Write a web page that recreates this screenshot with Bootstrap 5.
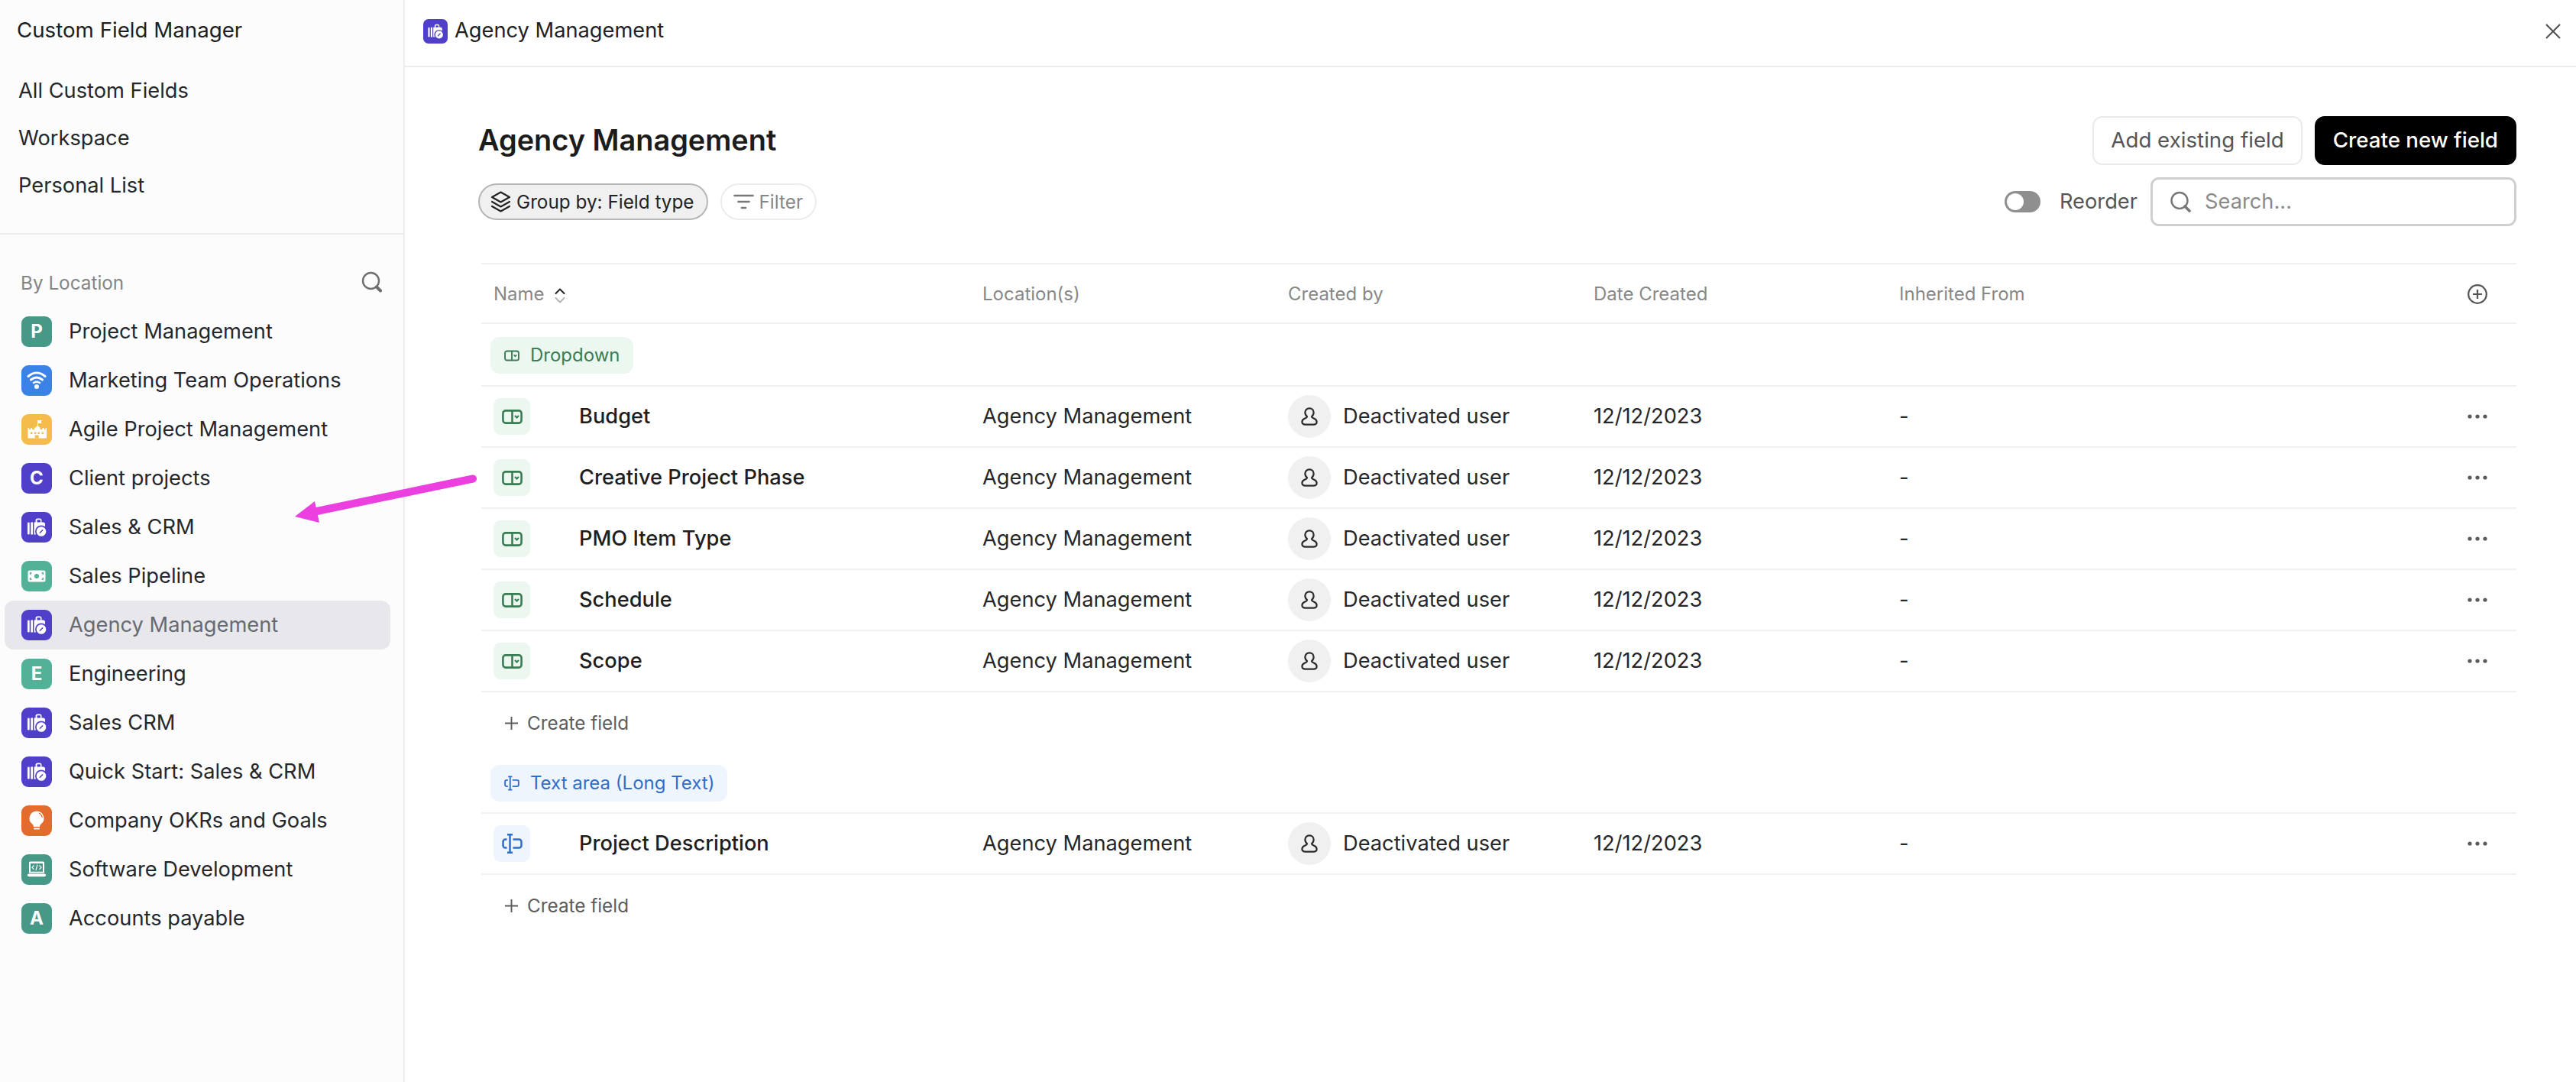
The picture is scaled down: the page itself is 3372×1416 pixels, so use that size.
<!DOCTYPE html>
<html lang="en">
<head>
<meta charset="utf-8">
<title>Custom Field Manager</title>
<link href="https://cdn.jsdelivr.net/npm/bootstrap@5.3.0/dist/css/bootstrap.min.css" rel="stylesheet">
<style>
html,body{height:100%}
body{font-family:"Inter","Noto Sans",sans-serif;font-size:27.25px;color:#1f2124;background:#fff;overflow:hidden}
.app-shell{height:1416px;width:3372px}
.side-pane{width:530px;background:#fcfcfc;border-right:2px solid #ececec;flex:none}
.side-title{height:80px;padding-left:22px;color:#1d1f22;font-size:27.7px}
.side-links{padding:8px 0 0 24px;box-sizing:content-box;height:217px;border-bottom:2px solid #ececec}
.side-links a{display:flex;align-items:center;height:62px;color:#25272a;text-decoration:none}
.loc-head{padding:48px 27px 0 27px;height:95px;color:#858585;font-size:24.3px}
.loc-item{height:64px;margin:0 17px 0 6px;padding-left:22px;gap:22px;border-radius:12px;color:#25272a}
.loc-item.is-active{background:#e8e8ec;color:#666a72}
.tile{width:40px;height:40px;border-radius:9px;color:#fff;font-size:24px;font-weight:700;flex:none}
.tile svg{width:40px;height:40px;display:block}
.t-teal{background:#489888}.t-blue{background:#3b82e6}.t-amber{background:#f6bc4b}.t-indigo{background:#4f3fc9}.t-mint{background:#52b197}.t-orange{background:#e26b2d}
.tile-sm{width:32px;height:32px;border-radius:7px}
.tile-sm svg{width:32px;height:32px}
.main-pane{min-width:0}
.top-bar{height:88px;padding:0 20px 5px 24px;border-bottom:2px solid #ececec;gap:9px}
.close-x{margin-left:auto;width:20px;height:20px;display:block;color:#4d4d4d}
.content-pad{padding:64px 78px 0 96px}
.page-name{font-size:37.9px;font-weight:600;color:#1c1c1c;margin:0}
.act-btn{height:64px;padding:0 22px;font-size:27.7px;border-radius:13px;line-height:1;display:flex;align-items:center}
.act-light{border:2px solid #eaeaea;background:#fff;color:#555}
.act-dark{border:2px solid #000;background:#000;color:#fff;font-weight:500}
.tools-row{margin-top:16px;height:64px}
.pill{height:48px;border-radius:24px;font-size:24.3px;gap:7px;padding:0 16px 0 14px;line-height:1}
.pill-on{background:#f0f0f0;border:2px solid #b6b6b6;color:#222}
.pill-off{background:#fff;border:2px solid #ececec;color:#868686;margin-left:16px;padding:0 16px 0 15px}
.sw-track{width:47px;height:28px;background:#8f8f8f;border-radius:14px;padding:3px;display:block}
.sw-knob{width:22px;height:22px;background:#fff;border-radius:50%;display:block}
.sw-text{color:#555;margin:0 17px 0 25px}
.find-box{width:479px;height:64px;border:3px solid #cfcfcf;border-radius:11px;padding-left:22px;gap:16px;color:#8a8a8a}
.fld-wrap{margin-top:48px;margin-left:4px}
.fld-table{table-layout:fixed;width:2664px;border-collapse:separate;border-spacing:0;margin:0}
.fld-table>*>tr>*{padding:0 0 0 17px;border-bottom:2px solid #f0f0f0;vertical-align:middle;background:transparent;font-weight:400;box-shadow:none}
.fld-table>thead>tr>*{height:80px;border-top:2px solid #f0f0f0;color:#888;font-size:24px;padding-top:1px}
.fld-table>thead>tr>.c-name{padding-left:16px}
.fld-table .c-name{width:639px}.fld-table .c-std{width:400px}
.fld-table>tbody>tr.grp>td{height:82px;padding-left:12px;padding-top:2px}
.fld-table>tbody>tr.grp2>td{height:81px}
.fld-table>tbody>tr.fld>td{height:80px;color:#25272a}
.fld-table>tbody>tr.mk>td{height:78px;border-bottom:0;color:#5c5c5c;font-size:24.3px;padding:3px 0 0 31px}
.sort-ic{width:14px;height:20px;margin-left:13px;vertical-align:-4px}
.grp-tag{height:48px;width:fit-content;border-radius:12px;padding:0 17px 0 18px;font-size:24px;gap:14px;line-height:1}
.tag-g{background:#ebf7ef;color:#3a7d54}
.tag-b{background:#eef5fd;color:#2f6ecb}
.ty-box{width:48px;height:48px;border-radius:9px;margin-left:-1px}
.fld-label{font-weight:500;color:#1e1e1e;margin-left:64px}
.ava{width:56px;height:56px;border-radius:50%;background:#f0f0f0;color:#2b2b2b}
.ava-row{gap:16px}
.fld-table>*>tr>.dots-cell{padding-right:38px}
.dots-ic{display:block;margin-left:auto}
.plus-line{gap:12px}
.sprite-defs{display:none}
.arrow-layer{position:absolute;left:380px;top:615px;width:250px;height:75px;pointer-events:none}
</style>
</head>
<body>
<svg class="sprite-defs" xmlns="http://www.w3.org/2000/svg">
  <symbol id="bag" viewBox="0 0 40 40">
    <rect x="8" y="13.500" width="2.700" height="16" rx="1.300" fill="#fff"/>
    <rect x="12.300" y="13.500" width="2.700" height="16" fill="#fff"/>
    <path fill="#fff" d="M16.500 13.500h2v-2.300a2.700 2.700 0 0 1 2.700-2.700h2.600a2.700 2.700 0 0 1 2.700 2.700v2.300h2a2.500 2.500 0 0 1 2.500 2.500v11a2.500 2.500 0 0 1-2.500 2.500h-12zM20.500 13.500h4.500v-2.400a.8.8 0 0 0-.8-.8h-2.900a.8.8 0 0 0-.8.8z"/>
    <circle cx="26" cy="25.500" r="8" fill="#4f3fc9"/>
    <circle cx="26" cy="25.500" r="6.300" fill="#fff"/>
    <path d="M24.300 27.200l3.400-3.400" stroke="#4f3fc9" stroke-width="1.500" stroke-linecap="round"/>
  </symbol>
  <symbol id="dd" viewBox="0 0 27 19">
    <g fill="none" stroke="currentColor" stroke-width="2.600"><rect x="1.400" y="1.400" width="24.200" height="16.200" rx="3.500"/><path d="M13.500 1.400v16.200"/><path d="M17 8l2.500 2.500L22 8" stroke-width="2.200"/></g>
  </symbol>
  <symbol id="ta" viewBox="0 0 27 26">
    <g fill="none" stroke="currentColor" stroke-width="2.500"><path d="M7 1.300h7M7 24.700h7M10.500 1.300v23.400"/><path d="M14.500 7.500h8a3 3 0 0 1 3 3v5a3 3 0 0 1-3 3h-8M6.500 7.500h-2a3 3 0 0 0-3 3v5a3 3 0 0 0 3 3h2"/></g>
  </symbol>
  <symbol id="usr" viewBox="0 0 22 24">
    <path fill="none" stroke="currentColor" stroke-width="2.200" d="M11 1.300c3.500 0 5.600 2.600 5.600 5.500 0 2.400-1.100 4.300-2.600 5.400 0 1.300 1.300 1.700 3.300 2.600 2.300 1 3.300 2.500 3.300 4.500 0 2.200-2 3.300-4.300 3.300H5.700c-2.300 0-4.300-1.100-4.300-3.300 0-2 1-3.500 3.300-4.500 2-.9 3.300-1.300 3.300-2.600-1.500-1.100-2.600-3-2.600-5.400C5.400 3.900 7.500 1.300 11 1.300z"/>
  </symbol>
  <symbol id="more" viewBox="0 0 26 6">
    <g fill="#5a5a5a"><circle cx="3" cy="3" r="2.600"/><circle cx="13" cy="3" r="2.600"/><circle cx="23" cy="3" r="2.600"/></g>
  </symbol>
  <symbol id="plus" viewBox="0 0 17 17">
    <path stroke="#5c5c5c" stroke-width="1.900" d="M8.500 0v17M0 8.500h17"/>
  </symbol>
</svg>
<div class="app-shell d-flex position-relative">

<aside class="side-pane d-flex flex-column">
  <div class="side-title d-flex align-items-center">Custom Field Manager</div>
  <nav class="side-links">
    <a href="#">All Custom Fields</a>
    <a href="#">Workspace</a>
    <a href="#">Personal List</a>
  </nav>
  <div class="loc-head d-flex align-items-start justify-content-between">
    <span class="lh-sm">By Location</span>
    <svg width="28" height="28" viewBox="0 0 28 28" fill="none" stroke="#6f6f6f" stroke-width="2.400"><circle cx="12.500" cy="12.500" r="10.500"/><path d="M20 20.500l5 5" stroke-width="4" stroke-linecap="round"/></svg>
  </div>
  <div class="d-flex flex-column">
    <div class="loc-item d-flex align-items-center"><span class="tile t-teal d-flex align-items-center justify-content-center">P</span><span>Project Management</span></div>
    <div class="loc-item d-flex align-items-center"><span class="tile t-blue"><svg viewBox="0 0 40 40" fill="none" stroke="#fff" stroke-linecap="round"><path d="M9 14.500c7-6 15-6 22 0" stroke-width="3"/><path d="M12.500 19c5-4 10-4 15 0" stroke-width="3"/><path d="M16 23c3-2 5-2 8 0" stroke-width="2.600"/><circle cx="20" cy="28" r="3" fill="#fff" stroke="none"/></svg></span><span>Marketing Team Operations</span></div>
    <div class="loc-item d-flex align-items-center"><span class="tile t-amber"><svg viewBox="0 0 40 40"><path fill="#fff" d="M21 8h6l-1.500 2 1.500 2h-5v3.200l2.500 2.600V20h3v-2h2v2h2v-2h1.500v13.500H8.500V18H10v2h2v-2h2v2h3v-1.200l2.500-2.600 1.500-1z"/><path fill="#f6bc4b" d="M12 23.500h2.400v2.400H12zM17 23.500h2.400v2.400H17zM21.500 23.500h2.400v2.400h-2.400zM26.500 23.500h2.400v2.400h-2.400zM17.700 27.500h5v4h-5z"/></svg></span><span>Agile Project Management</span></div>
    <div class="loc-item d-flex align-items-center"><span class="tile t-indigo d-flex align-items-center justify-content-center">C</span><span>Client projects</span></div>
    <div class="loc-item d-flex align-items-center"><span class="tile t-indigo"><svg viewBox="0 0 40 40"><use href="#bag"/></svg></span><span>Sales &amp; CRM</span></div>
    <div class="loc-item d-flex align-items-center"><span class="tile t-mint"><svg viewBox="0 0 40 40"><rect x="8.500" y="12.500" width="23" height="15" rx="2.500" fill="#fff"/><circle cx="20" cy="20" r="3" fill="#52b197"/><path d="M11 15h2.500v1.500H12.500V18H11zM29 15h-2.500v1.500h1V18H29zM11 25h2.500v-1.500H12.500V22H11zM29 25h-2.500v-1.500h1V22H29z" fill="#52b197"/></svg></span><span>Sales Pipeline</span></div>
    <div class="loc-item is-active d-flex align-items-center"><span class="tile t-indigo"><svg viewBox="0 0 40 40"><use href="#bag"/></svg></span><span>Agency Management</span></div>
    <div class="loc-item d-flex align-items-center"><span class="tile t-mint d-flex align-items-center justify-content-center">E</span><span>Engineering</span></div>
    <div class="loc-item d-flex align-items-center"><span class="tile t-indigo"><svg viewBox="0 0 40 40"><use href="#bag"/></svg></span><span>Sales CRM</span></div>
    <div class="loc-item d-flex align-items-center"><span class="tile t-indigo"><svg viewBox="0 0 40 40"><use href="#bag"/></svg></span><span>Quick Start: Sales &amp; CRM</span></div>
    <div class="loc-item d-flex align-items-center"><span class="tile t-orange"><svg viewBox="0 0 40 40"><path fill="#fff" d="M20 7.500a9.500 9.500 0 0 1 5.500 17.200c-.9.700-1.300 1.600-1.500 3.300h-8c-.2-1.700-.6-2.600-1.500-3.300A9.500 9.500 0 0 1 20 7.500z"/><rect x="16" y="29.500" width="8" height="1.900" rx=".9" fill="#fff"/><path d="M22.800 10a7.500 7.500 0 0 1 4.400 6" fill="none" stroke="#e26b2d" stroke-width="1.300"/></svg></span><span>Company OKRs and Goals</span></div>
    <div class="loc-item d-flex align-items-center"><span class="tile t-teal"><svg viewBox="0 0 40 40"><path fill="#fff" d="M11.500 9.500h17a1.500 1.500 0 0 1 1.500 1.500v13.500H10V11a1.500 1.500 0 0 1 1.500-1.500z"/><rect x="8" y="25.500" width="24" height="3.700" rx="1.800" fill="#fff"/><rect x="12" y="12" width="16" height="10.700" fill="#489888"/><path d="M16.500 14.500l-2.500 2.700 2.500 2.700M23.500 14.500l2.500 2.700-2.500 2.700M21 13.500l-2 7.500" fill="none" stroke="#fff" stroke-width="1.200"/></svg></span><span>Software Development</span></div>
    <div class="loc-item d-flex align-items-center"><span class="tile t-teal d-flex align-items-center justify-content-center">A</span><span>Accounts payable</span></div>
  </div>
</aside>

<main class="main-pane flex-grow-1">
  <div class="top-bar d-flex align-items-center">
    <span class="tile tile-sm t-indigo"><svg viewBox="0 0 40 40"><use href="#bag"/></svg></span>
    <span>Agency Management</span>
    <svg class="close-x" viewBox="0 0 20 20" fill="none" stroke="currentColor" stroke-width="2"><path d="M1 1l18 18M19 1L1 19"/></svg>
  </div>
  <div class="content-pad">
    <div class="d-flex align-items-center justify-content-between">
      <h1 class="page-name">Agency Management</h1>
      <div class="d-flex gap-3">
        <button class="act-btn act-light" type="button">Add existing field</button>
        <button class="act-btn act-dark" type="button">Create new field</button>
      </div>
    </div>
    <div class="tools-row d-flex align-items-center">
      <span class="pill pill-on d-flex align-items-center">
        <svg width="27" height="28" viewBox="0 0 27 28" fill="none" stroke="#222" stroke-width="2.200" stroke-linejoin="round" stroke-linecap="round"><path d="M13.500 1.500L25 8l-11.500 6.500L2 8z"/><path d="M2 14l11.500 6.500L25 14"/><path d="M2 20l11.500 6.500L25 20"/></svg>
        Group by: Field type
      </span>
      <span class="pill pill-off d-flex align-items-center">
        <svg width="27" height="24" viewBox="0 0 27 24" fill="none" stroke="#777" stroke-width="2.600" stroke-linecap="round"><path d="M1.500 4h24M6.500 12h14M11 20h5"/></svg>
        Filter
      </span>
      <span class="ms-auto sw-track"><span class="sw-knob"></span></span>
      <span class="sw-text">Reorder</span>
      <div class="find-box d-flex align-items-center">
        <svg width="30" height="28" viewBox="0 0 30 28" fill="none" stroke="#777" stroke-width="2.400"><circle cx="13" cy="12.500" r="10.500"/><path d="M20 20l6 6" stroke-width="3.600" stroke-linecap="round"/></svg>
        <span>Search...</span>
      </div>
    </div>
    <div class="fld-wrap">
      <table class="table fld-table">
        <thead>
          <tr>
            <th class="c-name" scope="col">Name<svg class="sort-ic" viewBox="0 0 14 20" fill="none" stroke-width="2" stroke-linecap="round" stroke-linejoin="round"><path d="M1.500 7L7 1.500 12.500 7" stroke="#222"/><path d="M1.500 13L7 18.500 12.500 13" stroke="#b4b4b4"/></svg></th>
            <th class="c-std" scope="col">Location(s)</th>
            <th class="c-std" scope="col">Created by</th>
            <th class="c-std" scope="col">Date Created</th>
            <th class="c-std" scope="col">Inherited From</th>
            <th class="dots-cell" scope="col"><svg class="dots-ic" width="26" height="26" viewBox="0 0 26 26" fill="none" stroke="#555" stroke-width="2.200"><circle cx="13" cy="13" r="11.800"/><path d="M13 7v12M7 13h12"/></svg></th>
          </tr>
        </thead>
        <tbody>
          <tr class="grp"><td colspan="6"><span class="grp-tag tag-g d-flex align-items-center"><svg width="20" height="15"><use href="#dd"/></svg>Dropdown</span></td></tr>
          <tr class="fld"><td><div class="d-flex align-items-center"><span class="ty-box tag-g d-flex align-items-center justify-content-center"><svg width="27" height="19"><use href="#dd"/></svg></span><span class="fld-label">Budget</span></div></td><td>Agency Management</td><td><div class="ava-row d-flex align-items-center"><span class="ava d-flex align-items-center justify-content-center"><svg width="22" height="24"><use href="#usr"/></svg></span>Deactivated user</div></td><td>12/12/2023</td><td>-</td><td class="dots-cell"><svg class="dots-ic" width="26" height="6"><use href="#more"/></svg></td></tr>
          <tr class="fld"><td><div class="d-flex align-items-center"><span class="ty-box tag-g d-flex align-items-center justify-content-center"><svg width="27" height="19"><use href="#dd"/></svg></span><span class="fld-label">Creative Project Phase</span></div></td><td>Agency Management</td><td><div class="ava-row d-flex align-items-center"><span class="ava d-flex align-items-center justify-content-center"><svg width="22" height="24"><use href="#usr"/></svg></span>Deactivated user</div></td><td>12/12/2023</td><td>-</td><td class="dots-cell"><svg class="dots-ic" width="26" height="6"><use href="#more"/></svg></td></tr>
          <tr class="fld"><td><div class="d-flex align-items-center"><span class="ty-box tag-g d-flex align-items-center justify-content-center"><svg width="27" height="19"><use href="#dd"/></svg></span><span class="fld-label">PMO Item Type</span></div></td><td>Agency Management</td><td><div class="ava-row d-flex align-items-center"><span class="ava d-flex align-items-center justify-content-center"><svg width="22" height="24"><use href="#usr"/></svg></span>Deactivated user</div></td><td>12/12/2023</td><td>-</td><td class="dots-cell"><svg class="dots-ic" width="26" height="6"><use href="#more"/></svg></td></tr>
          <tr class="fld"><td><div class="d-flex align-items-center"><span class="ty-box tag-g d-flex align-items-center justify-content-center"><svg width="27" height="19"><use href="#dd"/></svg></span><span class="fld-label">Schedule</span></div></td><td>Agency Management</td><td><div class="ava-row d-flex align-items-center"><span class="ava d-flex align-items-center justify-content-center"><svg width="22" height="24"><use href="#usr"/></svg></span>Deactivated user</div></td><td>12/12/2023</td><td>-</td><td class="dots-cell"><svg class="dots-ic" width="26" height="6"><use href="#more"/></svg></td></tr>
          <tr class="fld"><td><div class="d-flex align-items-center"><span class="ty-box tag-g d-flex align-items-center justify-content-center"><svg width="27" height="19"><use href="#dd"/></svg></span><span class="fld-label">Scope</span></div></td><td>Agency Management</td><td><div class="ava-row d-flex align-items-center"><span class="ava d-flex align-items-center justify-content-center"><svg width="22" height="24"><use href="#usr"/></svg></span>Deactivated user</div></td><td>12/12/2023</td><td>-</td><td class="dots-cell"><svg class="dots-ic" width="26" height="6"><use href="#more"/></svg></td></tr>
          <tr class="mk"><td colspan="6"><div class="plus-line d-flex align-items-center"><svg width="17" height="17"><use href="#plus"/></svg>Create field</div></td></tr>
          <tr class="grp grp2"><td colspan="6"><span class="grp-tag tag-b d-flex align-items-center"><svg width="20" height="20"><use href="#ta"/></svg>Text area (Long Text)</span></td></tr>
          <tr class="fld"><td><div class="d-flex align-items-center"><span class="ty-box tag-b d-flex align-items-center justify-content-center"><svg width="27" height="26"><use href="#ta"/></svg></span><span class="fld-label">Project Description</span></div></td><td>Agency Management</td><td><div class="ava-row d-flex align-items-center"><span class="ava d-flex align-items-center justify-content-center"><svg width="22" height="24"><use href="#usr"/></svg></span>Deactivated user</div></td><td>12/12/2023</td><td>-</td><td class="dots-cell"><svg class="dots-ic" width="26" height="6"><use href="#more"/></svg></td></tr>
          <tr class="mk"><td colspan="6"><div class="plus-line d-flex align-items-center"><svg width="17" height="17"><use href="#plus"/></svg>Create field</div></td></tr>
        </tbody>
      </table>
    </div>
  </div>
</main>

<svg class="arrow-layer" viewBox="380 615 250 75"><line x1="410" y1="670" x2="619" y2="626.500" stroke="#ec3fe0" stroke-width="10" stroke-linecap="round"/><path fill="#ec3fe0" d="M386 676l26-20 6 28z"/></svg>
</div>
<script src="https://cdn.jsdelivr.net/npm/bootstrap@5.3.0/dist/js/bootstrap.bundle.min.js"></script>
</body>
</html>
